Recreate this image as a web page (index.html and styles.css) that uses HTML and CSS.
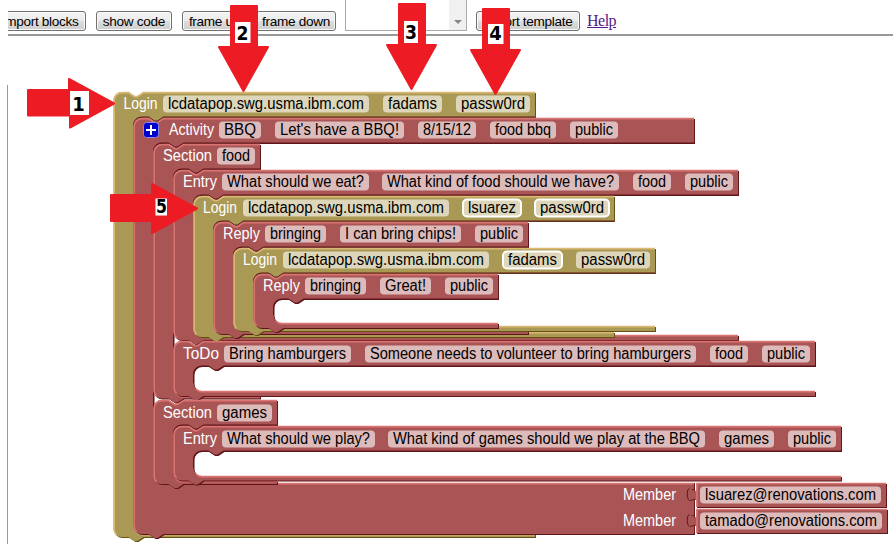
FILE: index.html
```html
<!DOCTYPE html>
<html lang="en">
<head>
<meta charset="utf-8">
<title>Template editor</title>
<link rel="stylesheet" href="styles.css">
</head>
<body>
<header class="toolbar">
  <button class="btn import">import blocks</button>
  <button class="btn show">show code</button>
  <button class="btn up">frame up</button>
  <button class="btn down">frame down</button>
  <div class="output"><div class="track"><span class="caret"></span></div></div>
  <button class="btn export">export template</button>
  <a class="help" href="#">Help</a>
</header>
<main class="workspace"><svg id="blocks" viewBox="8 85 885 459" width="885" height="459"></svg></main>
<svg id="callouts" class="callouts" viewBox="0 0 893 544" width="893" height="544"></svg>
<script src="blocks.js"></script>
</body>
</html>
```
FILE: styles.css
```css
* { box-sizing: border-box; }
body { margin: 0; width: 893px; height: 544px; overflow: hidden; background: #fff; position: relative; }
.toolbar {
  display: flex; align-items: flex-start; height: 36px; margin-left: 8px;
  border-bottom: 2px solid #999; overflow: hidden;
}
.btn {
  flex: none; height: 20px; margin: 11px 10px 0 0; padding: 1px 0 0; white-space: nowrap;
  font: 13.6px/17px "Liberation Sans", Arial, sans-serif; letter-spacing: -.3px; color: #000;
  border: 1px solid #707070; border-radius: 3px;
  background: linear-gradient(#f3f3f3, #ebebeb 50%, #dddddd 51%, #cfcfcf);
  box-shadow: inset 0 0 0 1px #fafafa;
}
.import { width: 94px; margin-left: -16px; padding-left: 3px; }
.show { width: 76px; }
.up { width: 65px; }
.down { width: 80px; margin-left: -1px; margin-right: 9px; }
.output { flex: none; width: 122px; height: 31px; border: 1px solid #aaa; border-top: 0; margin-right: 9px; display: flex; justify-content: flex-end; }
.track { width: 17px; background: #f0f0f0; display: flex; align-items: flex-end; justify-content: center; padding-bottom: 6px; }
.caret { border: 4px solid transparent; border-top-color: #888; border-bottom: 0; }
.export { width: 104px; margin-right: 7px; }
.help { font: 16px/18px "Liberation Serif", "Times New Roman", serif; letter-spacing: -.5px; color: #551a8b; margin-top: 12px; }
.workspace { margin: 49px 0 0 7px; height: 459px; border-left: 1px solid #999; }
.workspace svg { display: block; }
.callouts { position: absolute; left: 0; top: 0; pointer-events: none; }
.label, .value { font: 15.6px "Liberation Sans", Arial, sans-serif; }
.label { fill: #fff; }
.value { fill: #000; }
.red .body { fill: #a95555; }
.red .shade { fill: #5f1519; }
.red .light { stroke: #d97472; }
.red .field { fill: #ddbbbb; }
.olive .body { fill: #a99955; }
.olive .shade { fill: #665012; }
.olive .light { stroke: #d9b975; }
.olive .field { fill: #ddd6bb; }
.light { fill: none; stroke-width: 1.7; }
.tab { fill: none; stroke: #5f1519; stroke-width: 1; }
.active .field { stroke: #fff; stroke-width: 2; }
.plus-box { fill: #00c; stroke: #8888e0; stroke-width: 1; }
.plus { stroke: #fff; stroke-width: 2; }
.arrow { fill: #ed1c24; stroke: #ed1c24; stroke-width: 2; stroke-linejoin: round; }
.tag { fill: #fff; }
.digit { font: bold 19px "DejaVu Sans", sans-serif; fill: #000; text-anchor: middle; }
```
FILE: blocks.js
```javascript
const NS = 'http://www.w3.org/2000/svg';
function add(parent, tag, attrs, text) {
  const el = document.createElementNS(NS, tag);
  for (const k in attrs) el.setAttribute(k, attrs[k]);
  if (text) el.textContent = text;
  parent.appendChild(el);
  return el;
}

// in: bottom of the statement cavity; end: bottom edge of the block.
// Each field: [x, width, text, highlighted]
const blocks = [
  { c: 'olive', x: 113.5, y: 92, r: 535, in: 534, end: 537, label: [123.5, 34, 'Login'],
    fields: [[163, 206, 'lcdatapop.swg.usma.ibm.com'], [383, 59, 'fadams'], [456, 74, 'passw0rd']] },
  { c: 'red', x: 133.5, y: 118, r: 694, in: 483, end: 534, plus: true, label: [169, 45, 'Activity'],
    fields: [[219, 42, 'BBQ'], [275, 129, "Let's have a BBQ!"], [418, 58, '8/15/12'], [490, 66, 'food bbq'], [570, 48, 'public']] },
  { c: 'red', x: 153.5, y: 144, r: 260, in: 396, end: 398.5, label: [163, 49, 'Section'], fields: [[217, 38, 'food']] },
  { c: 'red', x: 173.5, y: 170, r: 738, in: 335, end: 340, label: [183, 34, 'Entry'],
    fields: [[222, 147, 'What should we eat?'], [382, 237, 'What kind of food should we have?'], [633, 38, 'food'], [685, 48, 'public']] },
  { c: 'olive', x: 193.5, y: 196, r: 614, in: 332, end: 337, label: [203, 34, 'Login'],
    fields: [[243, 206, 'lcdatapop.swg.usma.ibm.com'], [463, 58, 'lsuarez', 1], [535, 74, 'passw0rd', 1]] },
  { c: 'red', x: 213.5, y: 222, r: 528, in: 329, end: 334, label: [223, 37, 'Reply'],
    fields: [[265, 61, 'bringing'], [340, 121, 'I can bring chips!'], [475, 48, 'public']] },
  { c: 'olive', x: 233.5, y: 248, r: 655, in: 326, end: 331, label: [243, 34, 'Login'],
    fields: [[283, 206, 'lcdatapop.swg.usma.ibm.com'], [503, 59, 'fadams', 1], [576, 74, 'passw0rd']] },
  { c: 'red', x: 253.5, y: 274, r: 498, in: 323, end: 328, label: [263, 37, 'Reply'],
    fields: [[305, 61, 'bringing'], [380, 51, 'Great!'], [445, 48, 'public']] },
  { c: 'red', x: 173.5, y: 341, dy: 1, r: 815, in: 391, end: 396, label: [183, 36, 'ToDo'],
    fields: [[224, 127, 'Bring hamburgers'], [365, 331, 'Someone needs to volunteer to bring hamburgers'], [710, 38, 'food'], [762, 48, 'public']] },
  { c: 'red', x: 153.5, y: 400, dy: 1, r: 277, in: 481, end: 484, label: [163, 49, 'Section'], fields: [[217, 55, 'games']] },
  { c: 'red', x: 173.5, y: 426, dy: 1, r: 841, in: 476, end: 480.5, label: [183, 34, 'Entry'],
    fields: [[222, 153, 'What should we play?'], [388, 317, 'What kind of games should we play at the BBQ'], [719, 55, 'games'], [788, 48, 'public']] }
];

const svg = document.getElementById('blocks');

function text(g, cls, x, y, w, s) {
  add(g, 'text', { class: cls, x: x, y: y, textLength: w, lengthAdjust: 'spacingAndGlyphs' }, s);
}
function field(g, f, y) {
  const fg = add(g, 'g', { class: f[3] ? 'active' : '' });
  add(fg, 'rect', { class: 'field', x: f[0], y: y + 3.5, width: f[1], height: 17, rx: 4 });
  text(fg, 'value', f[0] + 5, y + 17, f[1] - 10, f[2]);
}

for (const b of blocks) {
  const { x, y, r } = b, head = y + 25, ty = y + (b.dy || 0);
  const d = `M${x} ${y + 8}a8 8 0 0 1 8 -8h7l6 4h3l6 -4H${r}V${head}H${x + 50}l-6 4h-3l-6 -4h-7a8 8 0 0 0 -8 8V${b.in - 8}` +
    `a8 8 0 0 0 8 8H${r}V${b.end}H${x + 30}l-6 4h-3l-6 -4H${x + 8}a8 8 0 0 1 -8 -8z`;
  const g = add(svg, 'g', { class: b.c });
  add(g, 'path', { class: 'shade', d: d, transform: 'translate(1 1)' });
  add(g, 'path', { class: 'body', d: d });
  // Dark edge along the top and left of the cavity.
  add(g, 'path', { class: 'tab', d: `M${r} ${head}H${x + 50}l-6 4h-3l-6 -4h-7a8 8 0 0 0 -8 8V${b.in - 8}` });
  add(g, 'path', { class: 'light', d: `M${x + .6} ${b.end - 8}V${y + 8.6}a8 8 0 0 1 8 -8h6.4l6 4h3l6 -4H${r}M${x + 22.5} ${b.in - 2}a8 8 0 0 0 5.5 2.6H${r}M${x + .6} ${b.end - 8}a8 8 0 0 0 2.4 5.6` });
  if (b.plus) {
    add(g, 'rect', { class: 'plus-box', x: 143.5, y: 122.5, width: 15, height: 15, rx: 3 });
    add(g, 'path', { class: 'plus', d: 'M146 130h10M151 125v10' });
  }
  text(g, 'label', b.label[0], ty + 17, b.label[1], b.label[2]);
  b.fields.forEach(f => field(g, f, ty));
}

[[483, 886, [700, 181, 'lsuarez@renovations.com']], [509, 887, [700, 182, 'tamado@renovations.com']]].forEach(([y, r, f]) => {
  const g = add(svg, 'g', { class: 'red' });
  text(g, 'label', 623, y + 17, 53, 'Member');
  add(g, 'rect', { class: 'shade', x: 697, y: y + 1, width: r - 696, height: 24 });
  add(g, 'path', { class: 'body', d: `M696.5 ${y}H${r}V${y + 24}H696.500V${y + 19}c0 -6 -8 5 -8 -5s8 -2 8 -8z` });
  add(g, 'path', { class: 'light', d: `M697 ${y + 24}V${y + .5}H${r}` });
  add(g, 'path', { class: 'tab', d: `M694.5 ${y}v4c0 3 -1 3 -3 2.500M689.500 ${y + 5.5}c-3 0 -3 11 0 12M690 ${y + 17.5}c2 0 4 -2 4.5 -1v8` });
  field(g, f, y);
});

const callouts = document.getElementById('callouts');
[
  ['M28 90H69V79L114 103.5L70 127.5V115.5H28z', 70, 91, 19, 24, 78.5, 111, '1', 12.5],
  ['M231 6H257V47H268L243.500 91L219 47H231z', 235, 22, 15.5, 21, 242.500, 40, '2', 12],
  ['M399 4H425V45H436L411.500 89L387 45H399z', 404, 21, 14, 22, 411, 39, '3', 12],
  ['M483 9H509V50H520L495.500 94L471 50H483z', 488, 24, 15.5, 20, 495.500, 40, '4', 12.5],
  ['M111 195H152V184L197 208.5L152 233V221H111z', 155.500, 198.5, 11.5, 17, 161.500, 213, '5', 11]
].forEach(([d, x, y, w, h, tx, ty, n, len]) => {
  add(callouts, 'path', { class: 'arrow', d: d });
  add(callouts, 'rect', { class: 'tag', x: x, y: y, width: w, height: h });
  add(callouts, 'text', { class: 'digit', x: tx, y: ty, textLength: len, lengthAdjust: 'spacingAndGlyphs' }, n);
});
```
